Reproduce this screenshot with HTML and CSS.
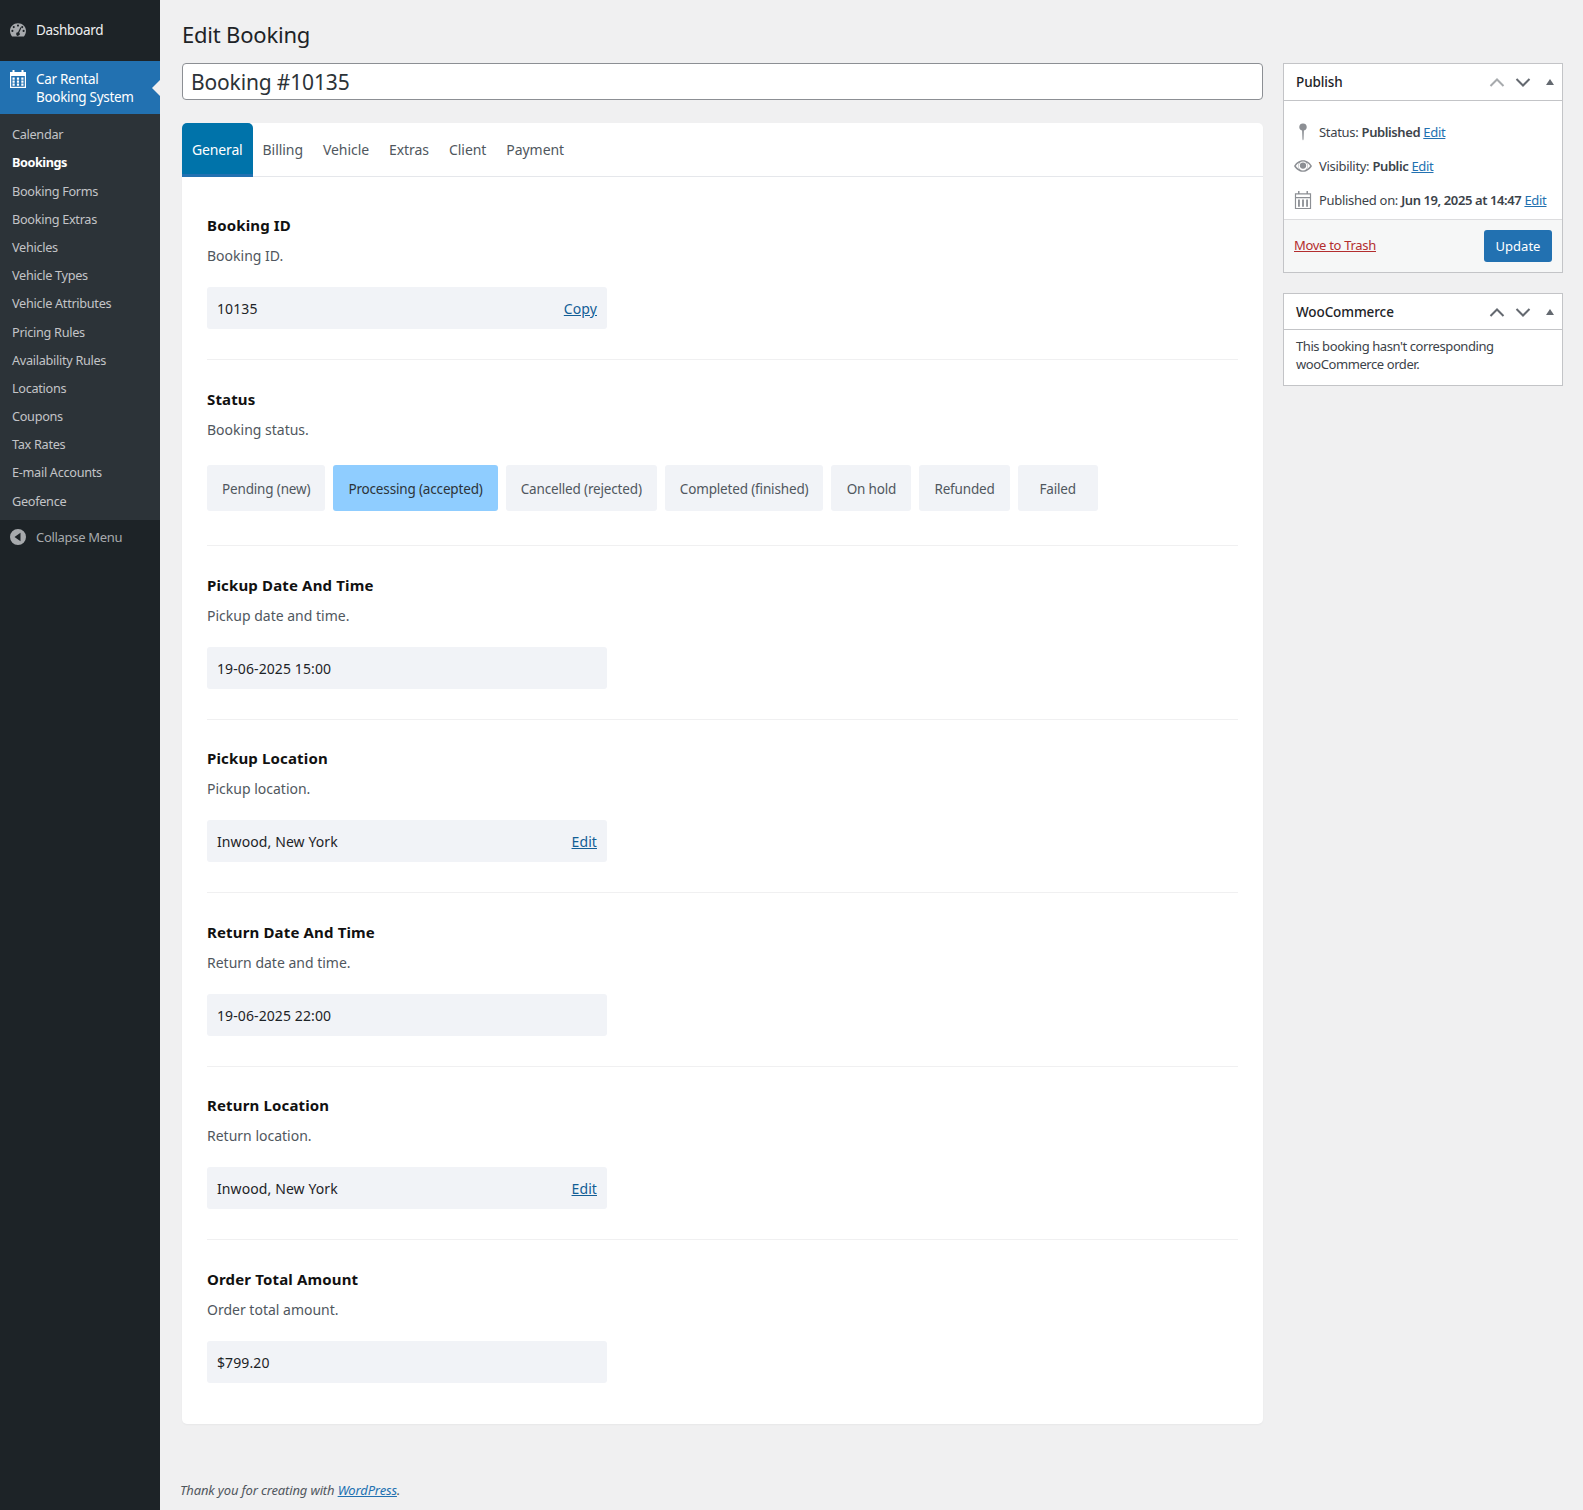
FILE: index.html
```html
<!DOCTYPE html>
<html lang="en">
<head>
<meta charset="utf-8">
<title>Edit Booking</title>
<link rel="stylesheet" href="styles.css">
</head>
<body>
<div class="app">
  <nav class="sidebar">
    <a class="top-item">
      <svg class="menu-icon" viewBox="0 0 20 17"><path fill="#a7aaad" fill-rule="evenodd" d="M10 0C4.500 0 0 4.200 0 9.500c0 2.700 1 5.200 2.600 7h14.800c1.600-1.800 2.600-4.300 2.600-7C20 4.200 15.500 0 10 0zM10 1.700a1.300 1.300 0 1 1 0 2.600 1.300 1.300 0 0 1 0-2.600zM4.700 3.600a1.300 1.300 0 1 1 0 2.600 1.300 1.300 0 0 1 0-2.600zM15.300 3.600a1.300 1.300 0 1 1 0 2.600 1.300 1.300 0 0 1 0-2.600zM3 8.300a1.300 1.300 0 1 1 0 2.600 1.300 1.300 0 0 1 0-2.600zM17 8.300a1.300 1.300 0 1 1 0 2.600 1.300 1.300 0 0 1 0-2.600zM13 5l1.300.7-2.800 6.300a2.200 2.200 0 1 1-1.500-.7z"/></svg>
      <span>Dashboard</span>
    </a>
    <a class="top-item active">
      <svg class="menu-icon cal" viewBox="0 0 16 18"><path fill="#fff" fill-rule="evenodd" d="M2.500 0h2v2h7V0h2v2H16v16H0V2h2.500zM1.200 6v10.800h13.600V6zM2.500 7.500h2.200v2.200H2.500zM6.900 7.500h2.200v2.200H6.900zM11.300 7.500h2.200v2.200h-2.200zM2.500 10.500h2.200v2.200H2.500zM6.900 10.500h2.200v2.200H6.900zM11.300 10.500h2.200v2.200h-2.200zM2.500 13.500h2.200v2.200H2.500zM6.900 13.500h2.200v2.200H6.900zM11.300 13.500h2.200v2.200h-2.200z"/></svg>
      <span>Car Rental<br>Booking System</span>
    </a>
    <ul class="submenu">
      <li>Calendar</li>
      <li class="current">Bookings</li>
      <li>Booking Forms</li>
      <li>Booking Extras</li>
      <li>Vehicles</li>
      <li>Vehicle Types</li>
      <li>Vehicle Attributes</li>
      <li>Pricing Rules</li>
      <li>Availability Rules</li>
      <li>Locations</li>
      <li>Coupons</li>
      <li>Tax Rates</li>
      <li>E-mail Accounts</li>
      <li>Geofence</li>
    </ul>
    <a class="collapse">
      <svg class="menu-icon" viewBox="0 0 16 16"><path fill="#a7aaad" fill-rule="evenodd" d="M8 0a8 8 0 1 1 0 16A8 8 0 0 1 8 0zM10.500 3.800 4.500 8l6 4.200z"/></svg>
      <span>Collapse Menu</span>
    </a>
  </nav>

  <div class="content">
    <h1 class="page-title">Edit Booking</h1>
    <div class="columns">
      <main class="primary">
        <input class="title-input" type="text" value="Booking #10135">
        <section class="card">
          <div class="tabs">
            <a class="tab selected">General</a>
            <a class="tab">Billing</a>
            <a class="tab">Vehicle</a>
            <a class="tab">Extras</a>
            <a class="tab">Client</a>
            <a class="tab">Payment</a>
          </div>
          <div class="panel">
            <div class="group">
              <div class="label">Booking ID</div>
              <div class="desc">Booking ID.</div>
              <div class="field"><span>10135</span><a href="#">Copy</a></div>
            </div>
            <div class="group">
              <div class="label">Status</div>
              <div class="desc">Booking status.</div>
              <div class="statuses">
                <span class="status">Pending (new)</span>
                <span class="status on">Processing (accepted)</span>
                <span class="status">Cancelled (rejected)</span>
                <span class="status">Completed (finished)</span>
                <span class="status">On hold</span>
                <span class="status">Refunded</span>
                <span class="status">Failed</span>
              </div>
            </div>
            <div class="group">
              <div class="label">Pickup Date And Time</div>
              <div class="desc">Pickup date and time.</div>
              <div class="field"><span>19-06-2025 15:00</span></div>
            </div>
            <div class="group">
              <div class="label">Pickup Location</div>
              <div class="desc">Pickup location.</div>
              <div class="field"><span>Inwood, New York</span><a href="#">Edit</a></div>
            </div>
            <div class="group">
              <div class="label">Return Date And Time</div>
              <div class="desc">Return date and time.</div>
              <div class="field"><span>19-06-2025 22:00</span></div>
            </div>
            <div class="group">
              <div class="label">Return Location</div>
              <div class="desc">Return location.</div>
              <div class="field"><span>Inwood, New York</span><a href="#">Edit</a></div>
            </div>
            <div class="group">
              <div class="label">Order Total Amount</div>
              <div class="desc">Order total amount.</div>
              <div class="field"><span>$799.20</span></div>
            </div>
          </div>
        </section>
      </main>
      <aside class="side">
        <div class="box">
          <div class="box-head">
            <h2>Publish</h2>
            <svg class="chev light" viewBox="0 0 16 16"><path d="M1.500 12l6.500-6.500 6.500 6.500"/></svg>
            <svg class="chev" viewBox="0 0 16 16"><path d="M1.500 5l6.500 6.500 6.500-6.500"/></svg>
            <svg class="tri" viewBox="0 0 10 8"><path d="M5 1l4 6H1z"/></svg>
          </div>
          <div class="pub-body">
            <div class="pub-row">
              <svg class="pub-icon" viewBox="0 0 20 20"><path fill="#8c8f94" d="M10 .5a4 4 0 0 1 1 7.900L10.600 18l-.6 1.500-.6-1.500L9 8.400A4 4 0 0 1 10 .5z"/></svg>
              <span>Status: <b>Published</b> <a href="#">Edit</a></span>
            </div>
            <div class="pub-row">
              <svg class="pub-icon" viewBox="0 0 20 20"><path fill="#8c8f94" fill-rule="evenodd" d="M10 3.500c4.500 0 8 3 10 6.500-2 3.500-5.500 6.500-10 6.500S2 13.500 0 10c2-3.500 5.500-6.500 10-6.500zM10 5a5 5 0 1 0 0 10 5 5 0 0 0 0-10zM2 10c1 1.500 2.300 2.700 3.800 3.500A6.200 6.200 0 0 1 5.800 6.500C4.300 7.300 3 8.500 2 10zM14.200 6.500a6.200 6.200 0 0 1 0 7c1.500-.8 2.800-2 3.800-3.500-1-1.500-2.300-2.700-3.800-3.500z"/><circle cx="10" cy="9.500" r="3.500" fill="#8c8f94"/></svg>
              <span>Visibility: <b>Public</b> <a href="#">Edit</a></span>
            </div>
            <div class="pub-row">
              <svg class="pub-icon" viewBox="0 0 20 20"><path fill="#8c8f94" fill-rule="evenodd" d="M4.500 0h1.600v2.500h7.800V0h1.600v2.500H19V20H1V2.500h3.500zM2.300 3.800v3h15.400v-3zM2.300 8v10.800h15.400V8zM4.500 9.500h2v8h-2zM9 9.500h2v8H9zM13.500 9.500h2v8h-2z"/></svg>
              <span>Published on: <b>Jun 19, 2025 at 14:47</b> <a href="#">Edit</a></span>
            </div>
          </div>
          <div class="pub-foot">
            <a class="trash" href="#">Move to Trash</a>
            <button class="update" type="button">Update</button>
          </div>
        </div>
        <div class="box">
          <div class="box-head woo">
            <h2>WooCommerce</h2>
            <svg class="chev" viewBox="0 0 16 16"><path d="M1.500 12l6.500-6.500 6.500 6.500"/></svg>
            <svg class="chev" viewBox="0 0 16 16"><path d="M1.500 5l6.500 6.500 6.500-6.500"/></svg>
            <svg class="tri" viewBox="0 0 10 8"><path d="M5 1l4 6H1z"/></svg>
          </div>
          <p class="woo-body">This booking hasn't corresponding<br>wooCommerce order.</p>
        </div>
      </aside>
    </div>
    <footer class="footer">Thank you for creating with <a href="#">WordPress</a>.</footer>
  </div>
</div>
</body>
</html>
```

FILE: styles.css
```css
* { box-sizing: border-box; }
html, body { margin: 0; padding: 0; }
body {
  background: #f0f0f1;
  color: #3c434a;
  font-family: "Noto Sans", "Open Sans", sans-serif;
  font-size: 13px;
  line-height: 1.4;
  letter-spacing: -0.3px;
}
a { color: #2271b1; }
.app { display: flex; min-height: 1510px; }

.sidebar {
  width: 160px;
  flex: none;
  background: #1d2327;
  padding-top: 13px;
  font-size: 14px;
}
.top-item {
  display: flex;
  color: #f0f0f1;
  height: 34px;
  align-items: center;
  padding-left: 10px;
  font-size: 13.500px;
}
.menu-icon { width: 16px; height: 16px; flex: none; margin-right: 10px; }
.top-item.active {
  position: relative;
  margin-top: 14px;
  height: 53px;
  background: #2271b1;
  color: #fff;
  line-height: 18px;
}
.top-item.active .menu-icon { height: 18px; margin-top: -18px; }
.top-item.active::after {
  content: "";
  position: absolute;
  right: 0;
  top: 19px;
  border: 8px solid transparent;
  border-left: 0;
  border-right-color: #f0f0f1;
}
.submenu {
  list-style: none;
  margin: 0;
  padding: 6.200px 0 4.800px;
  background: #2c3338;
  color: #c3c4c7;
  font-size: 12.700px;
}
.submenu li { padding: 5px 12px; height: 28.200px; line-height: 18.200px; }
.submenu .current { color: #fff; font-weight: 700; letter-spacing: -0.45px; }
.collapse {
  display: flex;
  align-items: center;
  height: 34px;
  padding-left: 10px;
  color: #a7aaad;
  font-size: 13px;
}

.content { flex: 1; min-width: 0; padding: 0 20px 0 22px; }
.page-title {
  margin: 0;
  padding: 18px 0 11px;
  height: 63px;
  font-size: 22px;
  line-height: 32px;
  font-weight: 400;
  color: #1d2327;
  letter-spacing: -0.2px;
}
.columns { display: flex; gap: 20px; align-items: flex-start; }
.primary { flex: 1; min-width: 0; }
.side { width: 280px; flex: none; display: flex; flex-direction: column; gap: 20px; }

.title-input {
  display: block;
  width: 100%;
  height: 37px;
  padding: 1px 8px 0;
  border: 1px solid #8c8f94;
  border-radius: 4px;
  background: #fff;
  color: #2c3338;
  font: inherit;
  font-size: 21px;
  letter-spacing: -0.15px;
  outline: 0;
}
.card {
  margin-top: 23px;
  background: #fff;
  border-radius: 5px;
  box-shadow: 0 1px 2px rgba(0, 0, 0, .04);
}
.tabs { display: flex; height: 54px; border-bottom: 1px solid #e5e7eb; }
.tab {
  padding: 0 10px;
  height: 54px;
  display: flex;
  align-items: center;
  font-size: 14px;
  letter-spacing: -0.06px;
  color: #50575e;
}
.tab.selected {
  background: #0073aa;
  color: #fff;
  border-radius: 5px 5px 0 0;
  border-bottom: 3px solid #2271b1;
  padding-top: 3px;
  letter-spacing: -0.15px;
}
.panel { padding: 10px 25px 41px; }
.group { padding: 28.400px 0 30px; border-bottom: 1px solid #f0f0f1; }
.group:last-child { border-bottom: 0; padding-bottom: 0; }
.label { font-size: 15px; line-height: 20px; font-weight: 700; color: #111; letter-spacing: 0.15px; }
.desc { margin-top: 10px; font-size: 14px; line-height: 22px; color: #50575e; letter-spacing: 0; }
.field {
  margin-top: 20.100px;
  width: 400px;
  height: 42px;
  display: flex;
  align-items: center;
  justify-content: space-between;
  padding: 1px 10px 0;
  background: #f1f3f7;
  border-radius: 3px;
  font-size: 14px;
  letter-spacing: 0.1px;
  color: #1d2327;
}
.field a { color: #135e96; }
.statuses { margin: 24.600px 0 4px; display: flex; gap: 8px; }
.status {
  height: 46px;
  min-width: 80px;
  padding: 1px 15px 0;
  display: flex;
  align-items: center;
  justify-content: center;
  background: #f1f3f7;
  border-radius: 3px;
  font-size: 13.500px;
  letter-spacing: -0.16px;
  color: #50575e;
}
.status.on { background: #8fcdff; color: #2c3338; }

.box { background: #fff; border: 1px solid #c3c4c7; }
.box-head {
  display: flex;
  align-items: center;
  height: 37px;
  padding: 0 7px 0 12px;
  border-bottom: 1px solid #c3c4c7;
}
.box-head.woo { height: 36px; }
.box-head h2 { margin: 0 auto 0 0; font-size: 13.500px; line-height: 18px; font-weight: 500; color: #1d2327; letter-spacing: -0.1px; }
.chev { width: 16px; height: 16px; margin-left: 10px; fill: none; stroke: #646970; stroke-width: 2; }
.chev.light { stroke: #a7aaad; }
.tri { width: 10px; height: 8px; margin-left: 14px; fill: #646970; }
.pub-body { padding: 14px 0 2px; }
.pub-row { display: flex; align-items: center; height: 34px; padding-left: 10px; font-size: 13px; }
.pub-icon { width: 18px; height: 18px; flex: none; margin-right: 7px; }
.pub-row b { font-weight: 600; letter-spacing: -0.4px; }
.pub-foot {
  display: flex;
  align-items: center;
  justify-content: space-between;
  height: 53px;
  padding: 0 10px;
  background: #f6f7f7;
  border-top: 1px solid #dcdcde;
}
.trash { color: #b32d2e; margin-bottom: 2px; }
.update {
  width: 68px;
  height: 32px;
  padding: 0;
  border: 0;
  border-radius: 3px;
  background: #2271b1;
  color: #fff;
  font: inherit;
  font-size: 13px;
}
.woo-body { margin: 0; padding: 7px 12px 12px; font-size: 13px; line-height: 18px; letter-spacing: -0.42px; }
.footer { margin-top: 57px; margin-left: -2px; font-style: italic; font-size: 13px; letter-spacing: -0.15px; color: #50575e; }
```
